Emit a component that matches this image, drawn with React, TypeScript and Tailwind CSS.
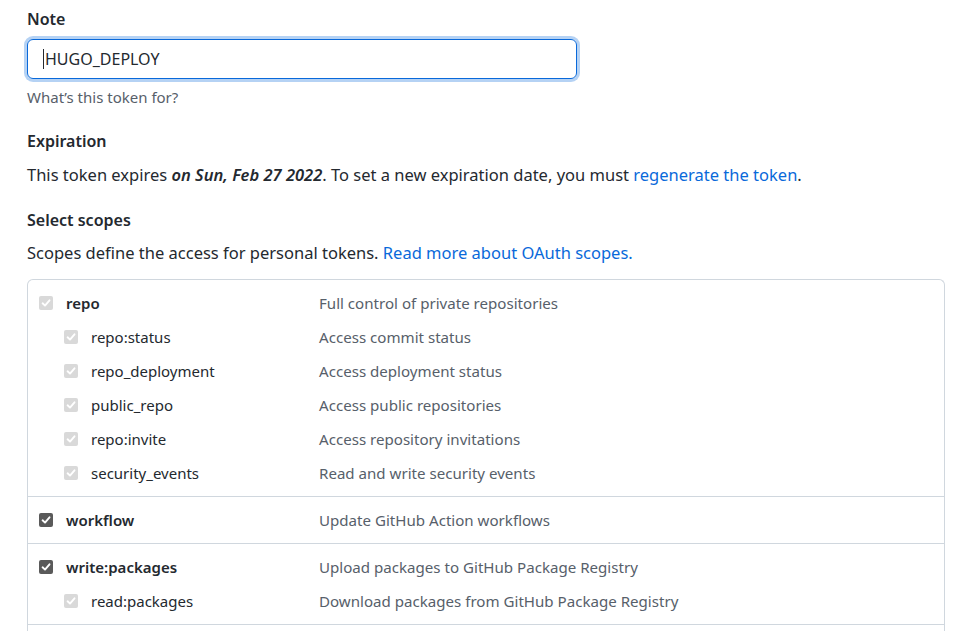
import React from "react";

type Scope = { name: string; desc: string; sub?: boolean; checked?: boolean };

const groups: Scope[][] = [
  [
    { name: "repo", desc: "Full control of private repositories" },
    { name: "repo:status", desc: "Access commit status", sub: true },
    { name: "repo_deployment", desc: "Access deployment status", sub: true },
    { name: "public_repo", desc: "Access public repositories", sub: true },
    { name: "repo:invite", desc: "Access repository invitations", sub: true },
    { name: "security_events", desc: "Read and write security events", sub: true },
  ],
  [{ name: "workflow", desc: "Update GitHub Action workflows", checked: true }],
  [
    { name: "write:packages", desc: "Upload packages to GitHub Package Registry", checked: true },
    { name: "read:packages", desc: "Download packages from GitHub Package Registry", sub: true },
  ],
];

function Check({ active }: { active?: boolean }) {
  return (
    <span
      className={
        "inline-flex items-center justify-center w-[14px] h-[14px] rounded-[2px] " +
        (active ? "bg-[#5a5a5a]" : "bg-[#d9d9d9]")
      }
    >
      <svg viewBox="0 0 12 12" className="w-[12px] h-[12px]">
        <path d="M2.6 6.3 L5 8.6 L9.5 3.3" fill="none" stroke="white" strokeWidth="1.9" strokeLinecap="round" strokeLinejoin="round" />
      </svg>
    </span>
  );
}

function Row({ s }: { s: Scope }) {
  return (
    <div className="flex items-center h-[34px]">
      <div className={"flex items-center w-[291px] " + (s.sub ? "pl-[36px]" : "pl-[11px]")}>
        <Check active={s.checked} />
        <span className={"ml-[13px] text-[15px] " + (s.sub ? "" : "font-semibold")}>{s.name}</span>
      </div>
      <span className="text-[15.1px] text-[#57606a]">{s.desc}</span>
    </div>
  );
}

export default function App() {
  return (
    <div className="min-h-screen bg-white px-[27px] pt-[7px] text-[#24292f] font-['Segoe_UI','Noto_Sans',sans-serif]">
      <label className="block text-[16px] font-semibold leading-[24px]">Note</label>
      <div className="mt-[8px] w-[550px] h-[40px] rounded-[6px] border border-[#0969da] ring-[3px] ring-[#0969da]/30 flex items-center px-[15px] text-[16px]">
        <span className="w-px h-[20px] bg-[#24292f] mr-[1px]" />
        HUGO_DEPLOY
      </div>
      <p className="mt-[8px] text-[15px] text-[#57606a] leading-[20px]">What’s this token for?</p>

      <h3 className="mt-[22px] text-[16px] font-semibold leading-[24px]">Expiration</h3>
      <p className="mt-[10px] text-[16.5px] leading-[24px]">
        This token expires <em className="font-semibold">on Sun, Feb 27 2022</em>. To set a new expiration date, you must{" "}
        <a className="text-[#0969da]">regenerate the token</a>.
      </p>

      <h3 className="mt-[21px] text-[16px] font-semibold leading-[24px]">Select scopes</h3>
      <p className="mt-[9px] text-[16.5px] leading-[24px]">
        Scopes define the access for personal tokens. <a className="text-[#0969da]">Read more about OAuth scopes.</a>
      </p>

      <div className="mt-[14px] w-[918px] border border-[#d0d7de] rounded-t-[6px] border-b-0">
        {groups.map((g, i) => (
          <div key={i} className="py-[6px] border-b border-[#d0d7de]">
            {g.map((s) => (
              <Row key={s.name} s={s} />
            ))}
          </div>
        ))}
        <div className="h-[20px]" />
      </div>
    </div>
  );
}
